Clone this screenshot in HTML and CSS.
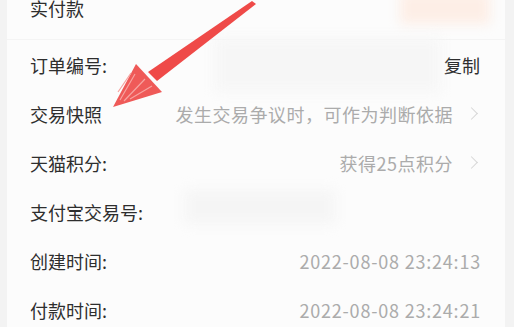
FILE: index.html
```html
<!DOCTYPE html>
<html lang="zh">
<head>
  <meta charset="UTF-8">
  <meta name="viewport" content="width=device-width, initial-scale=1.0">
  <title>订单信息</title>
  <link rel="stylesheet" href="styles.css">
</head>
<body>
  <div class="card">
    <div class="section top">
      <div class="row"><span class="label">实付款</span></div>
    </div>
    <div class="section">
      <div class="row">
        <span class="label">订单编号:</span>
        <span class="action">复制</span>
      </div>
      <div class="row">
        <span class="label">交易快照</span>
        <span class="value">发生交易争议时，可作为判断依据<i class="chev"></i></span>
      </div>
      <div class="row">
        <span class="label">天猫积分:</span>
        <span class="value">获得25点积分<i class="chev"></i></span>
      </div>
      <div class="row">
        <span class="label">支付宝交易号:</span>
      </div>
      <div class="row">
        <span class="label">创建时间:</span>
        <span class="value date">2022-08-08 23:24:13</span>
      </div>
      <div class="row">
        <span class="label">付款时间:</span>
        <span class="value date">2022-08-08 23:24:21</span>
      </div>
    </div>
  </div>

  <!-- masked areas of the screenshot -->
  <div class="blur blur-price"></div>
  <div class="blur blur-order"></div>
  <div class="blur blur-alipay"></div>

  <!-- hand drawn arrow -->
  <svg class="arrow" width="514" height="327" viewBox="0 0 514 327">
    <path d="M252 1 L256 4 L157 81 L148 72 Z" fill="#ef4a48"/>
    <path d="M113 107 L136 64 L162 92 Z" fill="#ef5a58"/>
    <path d="M120 100 L135 74 M124 101 L145 79 M130 99 L152 86 M118 92 L131 73" stroke="#f7a3a0" stroke-width="1.2"/>
  </svg>
</body>
</html>
```

FILE: styles.css
```css
body {
  margin: 0;
  background: #f3f3f3;
  font-family: "Noto Sans CJK SC", "Noto Sans", sans-serif;
  overflow: hidden;
}

.card {
  margin: -17px 9px 0 7px;
  background: #fcfcfc;
}

.section {
  padding: 0 25px 0 23px;
}

.section.top {
  padding-bottom: 7px;
  border-bottom: 1px solid #f4f4f4;
}

.row {
  height: 49px;
  display: flex;
  align-items: center;
  justify-content: space-between;
  font-size: 18px;
}

.label {
  color: #2e2e2e;
}

.action {
  color: #2e2e2e;
}

.value {
  color: #ababab;
  display: flex;
  align-items: center;
  letter-spacing: 0.5px;
}

.value.date {
  letter-spacing: 0.8px;
  margin-right: -1px;
}

.chev {
  display: inline-block;
  width: 8px;
  height: 8px;
  border-top: 1.5px solid #d6d6d6;
  border-right: 1.5px solid #d6d6d6;
  transform: rotate(45deg);
  margin: 0 4px 0 14px;
}

.blur {
  position: absolute;
  filter: blur(6px);
}

.blur-price {
  left: 400px;
  top: -8px;
  width: 90px;
  height: 32px;
  background: #fdeee6;
}

.blur-order {
  left: 215px;
  top: 38px;
  width: 225px;
  height: 54px;
  background: #f6f6f6;
}

.blur-alipay {
  left: 185px;
  top: 190px;
  width: 150px;
  height: 34px;
  background: #f5f5f5;
}

.arrow {
  position: absolute;
  left: 0;
  top: 0;
}
```
